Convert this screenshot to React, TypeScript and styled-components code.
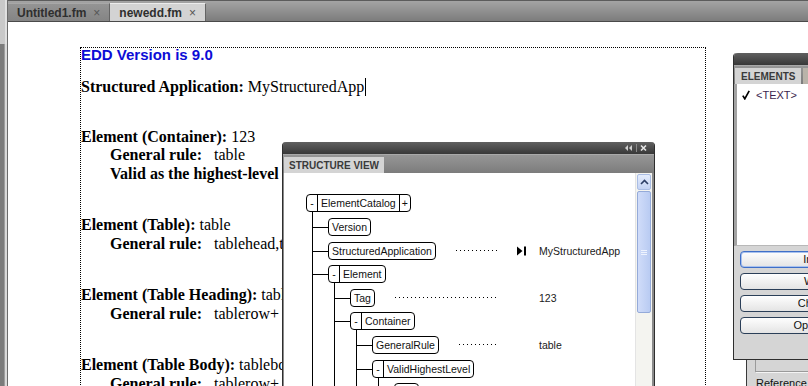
import React from 'react';
import styled, { createGlobalStyle } from 'styled-components';

type TreeNode = {
  label: string;
  collapsible?: boolean;
  expandable?: boolean;
  value?: string;
  marker?: boolean;
  children?: TreeNode[];
};

const tree: TreeNode = {
  label: 'ElementCatalog',
  collapsible: true,
  expandable: true,
  children: [
    { label: 'Version' },
    { label: 'StructuredApplication', value: 'MyStructuredApp', marker: true },
    {
      label: 'Element',
      collapsible: true,
      children: [
        { label: 'Tag', value: '123' },
        {
          label: 'Container',
          collapsible: true,
          children: [
            { label: 'GeneralRule', value: 'table' },
            {
              label: 'ValidHighestLevel',
              collapsible: true,
              children: [{ label: 'Yes' }],
            },
            { label: 'Comment' },
          ],
        },
        { label: 'Comment' },
      ],
    },
    { label: 'Element', collapsible: true },
  ],
};

const groups = [
  {
    element: 'Element (Container):',
    tag: '123',
    lines: [
      { label: 'General rule:', value: 'table' },
      { label: 'Valid as the highest-level element', value: '' },
    ],
  },
  {
    element: 'Element (Table):',
    tag: 'table',
    lines: [{ label: 'General rule:', value: 'tablehead,tablebody' }],
  },
  {
    element: 'Element (Table Heading):',
    tag: 'tablehead',
    lines: [{ label: 'General rule:', value: 'tablerow+' }],
  },
  {
    element: 'Element (Table Body):',
    tag: 'tablebody',
    lines: [{ label: 'General rule:', value: 'tablerow+' }],
  },
];

const panelButtons = ['Insert', 'Wrap', 'Change', 'Options...'];

const TreeItem = ({ node }: { node: TreeNode }) => (
  <Item>
    <Row>
      <NodeBox>
        {node.collapsible && <Toggle>-</Toggle>}
        <NodeLabel>{node.label}</NodeLabel>
        {node.expandable && <Toggle $end>+</Toggle>}
      </NodeBox>
      {node.value !== undefined && (
        <>
          <Leader />
          <ValueCell>
            <MarkerSlot>
              {node.marker && (
                <svg width="10" height="10" viewBox="0 0 10 10">
                  <polygon points="0,0.5 5.5,5 0,9.5" fill="#000" />
                  <rect x="7" y="0.5" width="2" height="9" fill="#000" />
                </svg>
              )}
            </MarkerSlot>
            {node.value}
          </ValueCell>
        </>
      )}
    </Row>
    {node.children && (
      <Children>
        {node.children.map((child, i) => (
          <TreeItem key={i} node={child} />
        ))}
      </Children>
    )}
  </Item>
);

const App = () => {
  return (
    <Frame>
      <GlobalStyle />
      <LeftRail>
        <RailTop />
      </LeftRail>

      <Main>
        <TabBar>
          <DocTab>
            Untitled1.fm <Close>×</Close>
          </DocTab>
          <DocTab $active>
            newedd.fm <Close>×</Close>
          </DocTab>
        </TabBar>

        <DocArea>
          <Page>
            <Version>EDD Version is 9.0</Version>
            <AppLine>
              <b>Structured Application: </b>MyStructuredApp
              <Caret />
            </AppLine>

            {groups.map((g, i) => (
              <Group key={i} $first={i === 0}>
                <Line>
                  <b>{g.element}</b> {g.tag}
                </Line>
                {g.lines.map((l, j) => (
                  <SubLine key={j}>
                    <RuleLabel>{l.label}</RuleLabel>
                    {l.value}
                  </SubLine>
                ))}
              </Group>
            ))}
          </Page>
        </DocArea>
      </Main>

      <StructurePanel>
        <TitleBar>
          <svg width="26" height="8" viewBox="0 0 26 8">
            <polygon points="0,4 3,1 3,7" fill="#cfcfcf" />
            <polygon points="4,4 7,1 7,7" fill="#cfcfcf" />
            <rect x="11" y="0" width="1" height="8" fill="#8a8a8a" />
            <path d="M16 1.5 L21 6.5 M21 1.5 L16 6.5" stroke="#e6e6e6" strokeWidth="1.6" />
          </svg>
        </TitleBar>
        <TabRow>
          <PanelTab>STRUCTURE VIEW</PanelTab>
        </TabRow>
        <StructureBody>
          <TreeArea>
            <TreeRoot>
              <TreeItem node={tree} />
            </TreeRoot>
          </TreeArea>
          <Scrollbar>
            <ScrollButton>
              <svg width="9" height="6" viewBox="0 0 9 6">
                <path d="M1 5 L4.5 1.5 L8 5" stroke="#2c3e66" strokeWidth="1.6" fill="none" />
              </svg>
            </ScrollButton>
            <Thumb>
              <Grip />
            </Thumb>
          </Scrollbar>
        </StructureBody>
      </StructurePanel>

      <ReferencePanel>
        <Groove />
        <RefLabel>Reference Elements</RefLabel>
      </ReferencePanel>

      <ElementsPanel>
        <TitleBar />
        <TabRow>
          <PanelTab $wide>ELEMENTS</PanelTab>
          <PanelTab $muted>ATTRIBUTES</PanelTab>
        </TabRow>
        <ElementList>
          <ElementRow>
            <svg width="8" height="10" viewBox="0 0 8 10">
              <path d="M0.8 5.6 L2.8 8.8 L7.2 0.8" stroke="#000" strokeWidth="1.7" fill="none" />
            </svg>
            <ElementName>&lt;TEXT&gt;</ElementName>
          </ElementRow>
        </ElementList>
        <ButtonArea>
          {panelButtons.map((b, i) => (
            <PanelButton key={b} $focused={i === 0}>
              {b}
            </PanelButton>
          ))}
        </ButtonArea>
      </ElementsPanel>
    </Frame>
  );
};

const GlobalStyle = createGlobalStyle`
  html, body {
    margin: 0;
    padding: 0;
    overflow: hidden;
    background: #fff;
  }

  #root {
    width: 808px;
    height: 386px;
  }
`;

const Frame = styled.div`
  position: relative;
  display: flex;
  width: 808px;
  height: 386px;
  overflow: hidden;
`;

const LeftRail = styled.div`
  flex: none;
  width: 8px;
  background: linear-gradient(
    to right,
    #7c7c7c 0 4px,
    #9e9e9e 4px 5px,
    #dadada 5px 7px,
    #6c6c6c 7px 8px
  );
`;

const RailTop = styled.div`
  height: 44px;
  background: linear-gradient(
    to right,
    #c9c9c9 0 5px,
    #e0e0e0 5px 7px,
    #6c6c6c 7px 8px
  );
`;

const Main = styled.div`
  flex: 1;
  min-width: 0;
  display: flex;
  flex-direction: column;
`;

const TabBar = styled.div`
  flex: none;
  height: 20px;
  display: flex;
  align-items: flex-end;
  border-top: 1px solid #5c5c5c;
  border-bottom: 1px solid #4a4a4a;
  background: linear-gradient(#a4a4a4, #7c7c7c);
`;

const DocTab = styled.div<{ $active?: boolean }>`
  height: 18px;
  display: flex;
  align-items: center;
  gap: 7px;
  padding: 0 9px;
  box-sizing: border-box;
  border-top: 1px solid ${({ $active }) => ($active ? '#ececec' : '#a8a8a8')};
  border-right: 1px solid #646464;
  background: ${({ $active }) =>
    $active ? '#d3d3d3' : 'linear-gradient(#949494, #848484)'};
  color: #2f2f2f;
  font: bold 12px 'Liberation Sans', Arial, sans-serif;
`;

const Close = styled.span`
  font-weight: normal;
  font-size: 12px;
  color: #555;
`;

const DocArea = styled.div`
  flex: 1;
  overflow: hidden;
  background: #fff;
  padding: 25px 0 0 72px;
`;

const Page = styled.div`
  width: 626px;
  min-height: 400px;
  box-sizing: border-box;
  border: 1px dotted #000;
  border-bottom: none;
  font-family: 'Liberation Serif', 'Times New Roman', serif;
  font-size: 16px;
  color: #000;
`;

const Version = styled.div`
  font: bold 15px/14px 'Liberation Sans', Arial, sans-serif;
  color: #0c0cd6;
`;

const AppLine = styled.div`
  margin-top: 15px;
  line-height: 19px;
  white-space: nowrap;
`;

const Caret = styled.span`
  display: inline-block;
  width: 1px;
  height: 18px;
  margin-left: 1px;
  background: #000;
  vertical-align: -4px;
`;

const Group = styled.div<{ $first?: boolean }>`
  margin-top: ${({ $first }) => ($first ? '31.5px' : '33px')};
`;

const Line = styled.div`
  line-height: 18.5px;
  white-space: nowrap;
`;

const SubLine = styled(Line)`
  padding-left: 29px;
`;

const RuleLabel = styled.b`
  display: inline-block;
  min-width: 104px;
`;

const StructurePanel = styled.div`
  position: absolute;
  left: 282px;
  top: 142px;
  width: 373px;
  height: 260px;
  box-sizing: border-box;
  display: flex;
  flex-direction: column;
  border-left: 1px solid #2e2e2e;
  border-right: 1px solid #2e2e2e;
  border-radius: 4px 4px 0 0;
  background: #8a8a8a;
`;

const TitleBar = styled.div`
  flex: none;
  height: 12px;
  display: flex;
  align-items: center;
  justify-content: flex-end;
  padding-right: 3px;
  border-radius: 4px 4px 0 0;
  background: linear-gradient(#606060, #383838);
`;

const TabRow = styled.div`
  flex: none;
  height: 19px;
  box-sizing: border-box;
  display: flex;
  gap: 2px;
  padding: 2px 0 0 1px;
  border-top: 1px solid #a9a9a9;
  background: linear-gradient(#969696, #7c7c7c);
  overflow: hidden;
`;

const PanelTab = styled.div<{ $muted?: boolean; $wide?: boolean }>`
  flex: none;
  display: flex;
  align-items: center;
  padding: 0 ${({ $wide }) => ($wide ? '6px' : '5px')};
  background: ${({ $muted }) => ($muted ? '#b9b3a9' : '#d4d4d4')};
  color: #3a3a3a;
  font: bold 10px 'Liberation Sans', Arial, sans-serif;
`;

const StructureBody = styled.div`
  flex: 1;
  display: flex;
  margin: 0 2px 0 1px;
  background: #fff;
  overflow: hidden;
`;

const TreeArea = styled.div`
  flex: 1;
  padding: 18.6px 0 0 22px;
  overflow: hidden;
`;

const TreeRoot = styled.ul`
  margin: 0;
  padding: 0;
  list-style: none;
`;

const Item = styled.li`
  list-style: none;
`;

const Children = styled.ul`
  margin: -2.8px 0 0 6px;
  padding: 2.8px 0 0 15px;
  border-left: 1px solid #000;
`;

const Row = styled.div`
  position: relative;
  height: 23.6px;
  display: flex;
  align-items: center;

  ${Children} > ${Item} > &::before {
    content: '';
    position: absolute;
    left: -15px;
    top: 50%;
    width: 15px;
    border-top: 1px solid #000;
  }
`;

const NodeBox = styled.div`
  flex: none;
  height: 18px;
  box-sizing: border-box;
  display: flex;
  border: 1px solid #000;
  border-radius: 4px;
  background: #fff;
  font: 10.5px/16px 'Liberation Sans', Arial, sans-serif;
  color: #111;
`;

const Toggle = styled.span<{ $end?: boolean }>`
  width: 10px;
  text-align: center;
  ${({ $end }) => ($end ? 'border-left' : 'border-right')}: 1px solid #000;
`;

const NodeLabel = styled.span`
  padding: 0 3px;
  white-space: nowrap;
`;

const Leader = styled.div`
  flex: 1;
  height: 1px;
  margin-left: 20px;
  background: repeating-linear-gradient(to right, #000 0 1px, transparent 1px 4px);
`;

const ValueCell = styled.div`
  flex: none;
  width: 137px;
  display: flex;
  align-items: center;
  font: 10.5px 'Liberation Sans', Arial, sans-serif;
  color: #1a1a1a;
  white-space: nowrap;
`;

const MarkerSlot = styled.span`
  width: 41px;
  display: flex;
  padding-left: 19px;
  box-sizing: border-box;
`;

const Scrollbar = styled.div`
  flex: none;
  width: 17px;
  box-sizing: border-box;
  display: flex;
  flex-direction: column;
  gap: 1px;
  padding: 1px 1px 0;
  border-left: 1px solid #e4e4e4;
  background: #f4f4f0;
`;

const ScrollButton = styled.div`
  height: 16px;
  display: flex;
  align-items: center;
  justify-content: center;
  box-sizing: border-box;
  border: 1px solid #aabde4;
  border-radius: 2px;
  background: linear-gradient(#e4ecfc, #c4d3f4);
`;

const Thumb = styled.div`
  height: 122px;
  box-sizing: border-box;
  display: flex;
  align-items: center;
  justify-content: center;
  border: 1px solid #94aad9;
  border-radius: 2px;
  background: linear-gradient(to right, #d0dcf9, #b9cbf2);
`;

const Grip = styled.div`
  width: 6px;
  height: 5px;
  background: repeating-linear-gradient(#eef3fe 0 1px, transparent 1px 2px);
`;

const ElementsPanel = styled.div`
  position: absolute;
  left: 733px;
  top: 53px;
  width: 170px;
  height: 307px;
  box-sizing: border-box;
  display: flex;
  flex-direction: column;
  border-left: 1px solid #2e2e2e;
  border-bottom: 1px solid #2e2e2e;
  border-radius: 4px 4px 0 0;
  background: #d5d5d5;
  z-index: 2;
`;

const ElementList = styled.div`
  height: 162px;
  box-sizing: border-box;
  padding: 4px 0 0 5px;
  border-left: 3px solid #a3a3a3;
  border-bottom: 1px solid #b8b8b8;
  background: #fff;
`;

const ElementRow = styled.div`
  display: flex;
  align-items: center;
  gap: 6px;
  height: 14px;
`;

const ElementName = styled.span`
  font: 11px 'Liberation Sans', Arial, sans-serif;
  color: #3c1f50;
`;

const ButtonArea = styled.div`
  display: flex;
  flex-direction: column;
  gap: 5px;
  padding: 5px 0 0 6px;
`;

const PanelButton = styled.div<{ $focused?: boolean }>`
  width: 154px;
  height: 17px;
  box-sizing: border-box;
  border: 1px solid ${({ $focused }) => ($focused ? '#3f6fc8' : '#2b3f58')};
  border-radius: 4px;
  background: linear-gradient(#fefefe, #e4e4e4);
  box-shadow: ${({ $focused }) => ($focused ? 'inset 0 0 0 1px #a9c2ee' : 'none')};
  text-align: center;
  font: 11px/15px 'Liberation Sans', Arial, sans-serif;
  color: #111;
`;

const ReferencePanel = styled.div`
  position: absolute;
  left: 746px;
  top: 340px;
  width: 120px;
  height: 60px;
  box-sizing: border-box;
  padding-left: 8px;
  border-left: 1px solid #3a3a3a;
  background: #d5d5d5;
  z-index: 1;
`;

const Groove = styled.div`
  height: 32px;
  box-sizing: border-box;
  border-left: 1px solid #9a9a9a;
  border-bottom: 1px solid #9a9a9a;
  box-shadow: 1px 1px 0 #f4f4f4;
`;

const RefLabel = styled.div`
  margin-top: 5px;
  padding-left: 1px;
  font: 11px 'Liberation Sans', Arial, sans-serif;
  color: #111;
  white-space: nowrap;
`;

export default App;
